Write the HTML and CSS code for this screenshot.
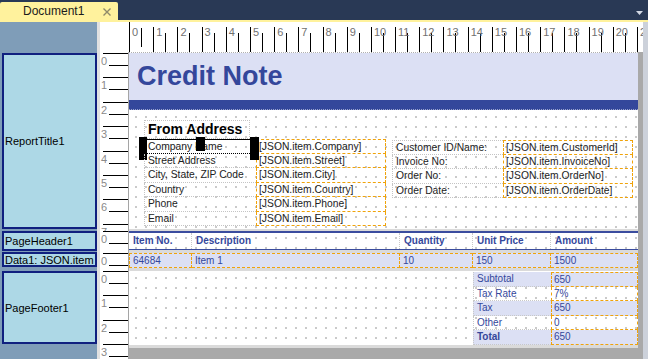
FILE: index.html
```html
<!DOCTYPE html>
<html lang="en">
<head>
  <meta charset="UTF-8">
  <title>Document1 - Report Designer</title>
  <link rel="stylesheet" href="styles.css">
</head>
<body>
  <div class="topbar">
    <div class="tab">
      <span class="tab-title">Document1</span>
      <svg class="tab-close" width="8" height="8" viewBox="0 0 8 8"><path d="M0.5 0.5L7.5 7.5M7.5 0.5L0.5 7.5" stroke="#8f8a6a" stroke-width="1.4"/></svg>
    </div>
    <svg class="tab-menu" width="7" height="4" viewBox="0 0 7 4"><path d="M0 0H7L3.5 4Z" fill="#d3d9e4"/></svg>
  </div>
  <div class="tabline"></div>

  <div class="workspace">
    <div class="bands">
      <div class="band-label title">ReportTitle1</div>
      <div class="band-label header">PageHeader1</div>
      <div class="band-label data">Data1: JSON.item</div>
      <div class="band-label footer">PageFooter1</div>
    </div>
    <div class="splitter"></div>

    <div class="designer">
      <div class="hruler-row">
        <div class="corner"></div>
        <div class="hruler">
          <span class="hmark first">0</span>
          <span class="hmark">1</span>
          <span class="hmark">2</span>
          <span class="hmark">3</span>
          <span class="hmark">4</span>
          <span class="hmark">5</span>
          <span class="hmark">6</span>
          <span class="hmark">7</span>
          <span class="hmark">8</span>
          <span class="hmark">9</span>
          <span class="hmark">10</span>
          <span class="hmark">11</span>
          <span class="hmark">12</span>
          <span class="hmark">13</span>
          <span class="hmark">14</span>
          <span class="hmark">15</span>
          <span class="hmark">16</span>
          <span class="hmark">17</span>
          <span class="hmark">18</span>
          <span class="hmark">19</span>
          <span class="hmark">20</span>
          <span class="hmark">21</span>
        </div>
        <div class="scroll-top"></div>
      </div>

      <div class="design-row">
        <div class="vruler">
          <div class="vseg title">
            <div class="vunit">0</div>
            <div class="vunit">1</div>
            <div class="vunit">2</div>
            <div class="vunit">3</div>
            <div class="vunit">4</div>
            <div class="vunit">5</div>
            <div class="vunit">6</div>
            <div class="vunit">7</div>
          </div>
          <div class="vseg header"><div class="vunit">0</div></div>
          <div class="vseg data"><div class="vunit">0</div></div>
          <div class="vseg footer">
            <div class="vunit">0</div>
            <div class="vunit">1</div>
            <div class="vunit">2</div>
            <div class="vunit">3</div>
          </div>
        </div>

        <div class="page-area">
          <div class="page">
            <!-- ReportTitle1 -->
            <div class="band-title">
              <div class="title-head"><h1>Credit Note</h1></div>
              <div class="title-rule"></div>
              <div class="address dots">
                <div class="from">
                  <div class="from-head">From Address</div>
                  <div class="fields left">
                    <div class="lbl sel">Company Name
                      <span class="handle l"></span><span class="handle m"></span><span class="handle r"></span>
                    </div>
                    <div class="val">[JSON.item.Company]</div>
                    <div class="lbl">Street Address</div>
                    <div class="val">[JSON.item.Street]</div>
                    <div class="lbl">City, State, ZIP Code</div>
                    <div class="val">[JSON.item.City]</div>
                    <div class="lbl">Country</div>
                    <div class="val">[JSON.item.Country]</div>
                    <div class="lbl">Phone</div>
                    <div class="val">[JSON.item.Phone]</div>
                    <div class="lbl">Email</div>
                    <div class="val">[JSON.item.Email]</div>
                  </div>
                </div>
                <div class="fields right">
                  <div class="lbl">Customer ID/Name:</div>
                  <div class="val">[JSON.item.CustomerId]</div>
                  <div class="lbl">Invoice No:</div>
                  <div class="val">[JSON.item.InvoiceNo]</div>
                  <div class="lbl">Order No:</div>
                  <div class="val">[JSON.item.OrderNo]</div>
                  <div class="lbl">Order Date:</div>
                  <div class="val">[JSON.item.OrderDate]</div>
                </div>
              </div>
            </div>
            <div class="band-sep thin"></div>

            <!-- PageHeader1 -->
            <div class="band-header dots">
              <div class="cols thead">
                <div>Item No.</div>
                <div>Description</div>
                <div>Quantity</div>
                <div>Unit Price</div>
                <div>Amount</div>
              </div>
            </div>
            <div class="band-sep"></div>

            <!-- Data1 -->
            <div class="band-data">
              <div class="cols trow">
                <div>64684</div>
                <div>Item 1</div>
                <div>10</div>
                <div>150</div>
                <div>1500</div>
              </div>
            </div>
            <div class="band-sep"></div>

            <!-- PageFooter1 -->
            <div class="band-footer dots">
              <div class="totals">
                <div class="k alt">Subtotal</div><div class="v alt">650</div>
                <div class="k">Tax Rate</div><div class="v">7%</div>
                <div class="k alt">Tax</div><div class="v alt">650</div>
                <div class="k">Other</div><div class="v">0</div>
                <div class="k alt total">Total</div><div class="v alt">650</div>
              </div>
            </div>
            <div class="band-sep"></div>
          </div>
        </div>
        <div class="gutter"></div>
        <div class="scrollbar"></div>
      </div>
    </div>
  </div>
</body>
</html>
```

FILE: styles.css
```css
body { margin: 0; width: 648px; height: 359px; overflow: hidden; font-family: "Liberation Sans", Arial, sans-serif; background: #293955; }

/* document tab strip */
.topbar { height: 20px; background: #293955; display: flex; align-items: flex-end; justify-content: space-between; }
.tab { width: 118px; height: 18px; box-sizing: border-box; padding: 0 7px 0 23px; background: #fff29d; border-radius: 2px 2px 0 0; display: flex; align-items: center; justify-content: space-between; }
.tab-title { font-size: 12px; color: #1b1b1b; }
.tab-close { margin-top: 1px; }
.tab-menu { margin: 0 5px 5px 0; }
.tabline { height: 2px; background: #fff29d; }

.workspace { display: flex; height: 337px; }

/* band names on the left */
.bands { width: 97px; box-sizing: border-box; padding: 31px 0 0 2px; background: #7f9db8; display: flex; flex-direction: column; }
.band-label { box-sizing: border-box; padding-left: 1px; background: #add8e6; border: 2px solid #10207f; font-size: 11px; color: #000; white-space: nowrap; display: flex; align-items: center; }
.band-label.title { height: 176px; }
.band-label.header { height: 20px; margin-top: 2px; }
.band-label.data { height: 15px; margin-top: 1px; }
.band-label.footer { height: 73px; margin-top: 4px; }
.splitter { width: 3px; background: #e1e1e1; }

.designer { flex: 1; display: flex; flex-direction: column; background: #fff; }

/* rulers */
.hruler-row { display: flex; height: 30px; }
.corner { width: 29px; }
.hruler { width: 514px; display: flex; align-items: flex-end; overflow: hidden; }
.hmark { flex: 0 0 24.2px; height: 25px; box-sizing: border-box; padding-left: 2px; border-left: 1px solid #000; font-size: 11px; line-height: 11px; color: #707070; background: linear-gradient(#000, #000) 11px 6px / 1px 19px no-repeat; }
.hmark.first { height: 30px; padding-top: 5px; }
.scroll-top { flex: 1; background: #ccd1da; }

.design-row { flex: 1; display: flex; }
.vruler { width: 28px; border-right: 1px solid #a5a5a5; padding-top: 1px; display: flex; flex-direction: column; overflow: hidden; }
.vseg { flex: none; overflow: hidden; }
.vseg.title { height: 178px; }
.vseg.header { height: 22px; }
.vseg.data { height: 18px; }
.vseg.footer { flex: 1; }
.vunit { height: 24.4px; box-sizing: border-box; padding: 3px 0 0 1px; font-size: 11px; line-height: 10px; color: #8a8a8a; background: linear-gradient(#000, #000) 3px 0 / 25px 1px no-repeat, linear-gradient(#000, #000) 9px 12px / 19px 1px no-repeat; }

/* report page */
.page-area { width: 509px; background: #a9a9a9; }
.page { background: #fff; border-top: 1px dotted #b0b0b0; }
.gutter { width: 5px; background: #a9a9a9; }
.scrollbar { width: 5px; background: #ccd1da; }
.band-sep { height: 3px; background: #dadada; }
.band-sep.thin { height: 2px; }
.dots { background-image: conic-gradient(at 2px 2px, transparent 75%, #cacaca 0); background-size: 10px 10px; background-position: 6px 6px; }

.band-title { height: 176px; display: flex; flex-direction: column; }
.title-head { height: 47px; box-sizing: border-box; padding: 8px 0 0 8px; background: #dce0f4; }
.title-head h1 { margin: 0; font-size: 27px; line-height: 31px; color: #34479b; }
.title-rule { height: 9px; background: #34479b; border-bottom: 1px dotted #9aa3cc; }
.address { flex: 1; display: flex; align-items: flex-start; padding: 10px 0 0 15px; }
.from-head { width: 106px; height: 19px; box-sizing: border-box; padding-left: 3px; border: 1px dotted #c4c4c4; font-size: 14px; font-weight: bold; line-height: 17px; color: #000; }

.fields { display: grid; grid-auto-rows: 14.5px; font-size: 10.3px; line-height: 13px; color: #222; }
.fields.left { grid-template-columns: 112px 130px; }
.fields.right { grid-template-columns: 111px 130px; margin: 20px 0 0 6px; }
.fields.right .lbl:first-child { border-top: 1px dotted #c4c4c4; }
.lbl { position: relative; padding-left: 3px; border-left: 1px dotted #c4c4c4; border-bottom: 1px dotted #c4c4c4; white-space: nowrap; }
.val { padding-left: 2px; border: 1px dashed #f0a30a; border-top: none; white-space: nowrap; }
.fields .val:nth-child(2) { border-top: 1px dashed #f0a30a; }
.lbl.sel { border-top: 1px solid #000; border-bottom: 1px dotted #000; }
.handle { position: absolute; top: -3px; background: #000; }
.handle.l { left: -6px; width: 8px; height: 23px; }
.handle.m { left: 51px; width: 9px; height: 14px; }
.handle.r { left: 105px; width: 9px; height: 23px; }

/* detail table */
.band-header { height: 19px; }
.cols { display: grid; grid-template-columns: 63px 208px 73px 78px 87px; height: 100%; box-sizing: border-box; }
.cols div { padding-left: 4px; font-size: 10px; color: #34479b; white-space: nowrap; }
.thead { border-top: 2px solid #3a4c9e; border-bottom: 1px solid #3a4c9e; }
.thead div { border-right: 1px dotted #c8c8c8; font-weight: bold; line-height: 16px; }
.thead div:last-child { border-right: none; }
.band-data { height: 15px; background: #dce0f4; }
.trow div { padding-left: 3px; border: 1px dashed #f0a30a; border-left: none; line-height: 13px; }
.trow div:first-child { border-left: 1px dashed #f0a30a; }

/* totals */
.band-footer { height: 74px; box-sizing: border-box; padding-top: 1px; display: flex; justify-content: flex-end; align-items: flex-start; }
.totals { display: grid; grid-template-columns: 78px 87px; grid-auto-rows: 14.5px; font-size: 10px; line-height: 13px; color: #34479b; }
.totals .k { padding-left: 3px; border-left: 1px dotted #c8c8c8; border-bottom: 1px dotted #c8c8c8; }
.totals .v { padding-left: 2px; border: 1px dashed #f0a30a; border-top: none; }
.totals .v:nth-child(2) { border-top: 1px dashed #f0a30a; }
.totals .alt { background-color: #dce0f4; }
.totals .total { font-weight: bold; }
```
